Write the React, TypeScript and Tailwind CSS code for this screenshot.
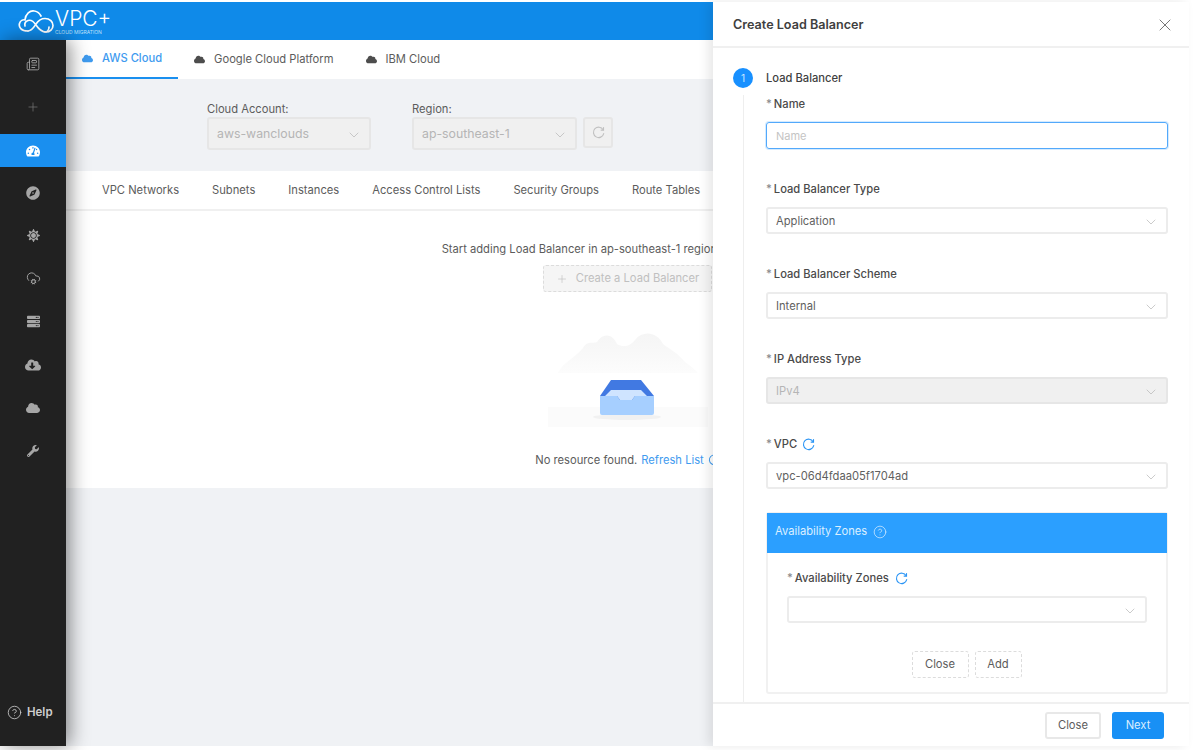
import React from "react";
import { ChevronDown, X, Plus, CircleHelp, Newspaper, CloudCog } from "lucide-react";
import { FaTachometerAlt, FaCompass, FaServer, FaCloud, FaWrench, FaCloudDownloadAlt, FaSun } from "react-icons/fa";

function Logo() {
  return (
    <svg width="36" height="26" viewBox="0 0 36 26" fill="none" stroke="#fff" strokeWidth="1.7" strokeLinecap="round">
      <path d="M10 23 C3 23 0.5 19 1.5 15.5 C2.3 12.5 5 11.5 7 11.8 C7.5 6 12 2 16.5 3 C20 3.6 22 6 23 8" />
      <path d="M10 23 C14 23 16 19 18 16 C20 13 23 10.5 27 10.5 C32 10.5 35 14 35 17.5 C35 21 32 24 28 24 C23 24 20 20 18 17 C16 14 13 11.5 10 12.5 C7 13.5 6.5 16 7 18" />
      <path d="M27 24 C29 24 31 22 31 19" />
    </svg>
  );
}

function Reload({ size = 13, width = 1.3, className = "" }: { size?: number; width?: number; className?: string }) {
  return (
    <svg width={size} height={size} viewBox="0 0 14 14" fill="none" stroke="currentColor" strokeWidth={width} strokeLinecap="round" className={className}>
      <path d="M12 4 A5.6 5.6 0 1 0 12.6 8.2" />
      <path d="M12.4 1.6 V4.4 H9.8" />
    </svg>
  );
}

function SelectBox({ value, disabled, className = "" }: { value?: string; disabled?: boolean; className?: string }) {
  return (
    <div className={`flex h-[27px] items-center justify-between rounded-[3px] border-2 pt-[2px] pl-[8px] pr-[7px] text-[11.2px] ${disabled ? "border-[#e6e6e6] bg-[#f0f0f0] text-[#b5b5b5]" : "border-[#ececec] bg-white text-[#5f5f5f]"} ${className}`}>
      <span>{value}</span>
      <ChevronDown size={16} strokeWidth={1.1} className="text-[#b8b8b8]" />
    </div>
  );
}

function Field({ label, value, disabled, spin }: { label: string; value: string; disabled?: boolean; spin?: boolean }) {
  return (
    <div className="mb-[31px]">
      <div className="mb-[9px] flex h-[18px] items-center text-[11.2px] font-medium text-[#4a4a4a]">
        <span className="mr-[2px] text-[#8a8a8a]">*</span>{label}
        {spin && <Reload size={13} width={1.2} className="ml-[5px] text-[#2b95f5]" />}
      </div>
      <SelectBox value={value} disabled={disabled} />
    </div>
  );
}

const side = [
  <Newspaper size={14} strokeWidth={1.5} />,
  <Plus size={14} strokeWidth={1.2} className="text-[#7a7a7a]" />,
  <FaTachometerAlt size={14} className="text-white" />,
  <FaCompass size={14} />,
  <FaSun size={13} />,
  <CloudCog size={15} strokeWidth={1.5} />,
  <FaServer size={13} />,
  <FaCloudDownloadAlt size={16} />,
  <FaCloud size={14} />,
  <FaWrench size={12} />,
];

function BoxArt() {
  return (
    <svg width="170" height="100" viewBox="0 0 170 100" className="block">
      <defs>
        <linearGradient id="cloudFade" x1="0" y1="0" x2="0" y2="1">
          <stop offset="0" stopColor="#f5f5f5" />
          <stop offset="1" stopColor="#fcfcfc" />
        </linearGradient>
      </defs>
      <path d="M15 41 C20 30 32 26 40 16 C44 8 50 12 54 10 C60 0 70 2 74 12 C80 16 88 14 92 8 C100 -2 114 0 120 12 C128 18 136 22 142 30 C148 34 152 38 155 41 Z" fill="url(#cloudFade)" />
      <rect x="5" y="75" width="160" height="20" fill="#fbfbfb" />
      <ellipse cx="84" cy="85" rx="34" ry="3" fill="#f1f1f1" />
      <path d="M57 64 L68 48 L98 48 L111 64 L111 72 L57 72 Z" fill="#4179e2" />
      <path d="M68 58 L98 58 L104 64 L92 64 L89 68 L77 68 L74 64 L62 64 Z" fill="#cfe4ff" />
      <path d="M57 64 L74 64 L77 68 L89 68 L92 64 L111 64 L111 81 Q111 83 109 83 L59 83 Q57 83 57 81 Z" fill="#a6cfff" />
    </svg>
  );
}

export default function App() {
  return (
    <div className="relative flex h-[750px] w-[1200px] flex-col overflow-hidden bg-white pt-[2px] pb-[4px] pr-[11px] text-[11.2px] text-[#5c5c5c] [font-family:Inter,'Liberation_Sans',sans-serif]">
      <header className="flex h-[38px] shrink-0 items-center bg-[#0f8ae9] pl-[18px] text-white">
        <Logo />
        <div className="mt-[2px] ml-[1px] flex flex-col leading-none">
          <span className="text-[21px] font-light leading-[20px]">VPC+</span>
          <span className="text-[5px] leading-[6px] text-[#bfe0fb]">CLOUD MIGRATION</span>
        </div>
      </header>

      <div className="flex min-h-0 flex-1">
        <aside className="relative z-10 flex w-[66px] shrink-0 flex-col bg-[#212121] pt-[2px] text-[#a6a6a6] shadow-[4px_0_18px_rgba(0,0,0,0.45)]">
          {side.map((icon, i) => (
            <div key={i} className="flex h-[43px] items-center justify-center">
              <div className={`flex h-[33px] w-full items-center justify-center ${i === 2 ? "mt-[2px] bg-[#1a8fef]" : ""}`}>{icon}</div>
            </div>
          ))}
          <div className="mt-auto mb-[25px] flex items-center pl-[7px] text-[11.5px] font-semibold text-[#cfcfcf]">
            <CircleHelp size={15} strokeWidth={1.3} className="mr-[5px]" />
            Help
          </div>
        </aside>

        <main className="flex min-w-0 flex-1 flex-col bg-[#f0f2f5]">
          <nav className="flex h-[39px] shrink-0 items-center bg-white">
            <div className="flex h-full items-center gap-[9px] border-b-2 border-[#1a8fef] px-[16px] font-medium text-[#3f9bef]">
              <FaCloud size={11} />AWS Cloud
            </div>
            <div className="flex h-full items-center gap-[9px] px-[16px]"><FaCloud size={11} className="text-[#4d4d4d]" />Google Cloud Platform</div>
            <div className="flex h-full items-center gap-[9px] px-[16px]"><FaCloud size={11} className="text-[#4d4d4d]" />IBM Cloud</div>
          </nav>

          <section className="flex h-[92px] shrink-0 gap-[41px] pl-[141px] pt-[22px]">
            <div className="w-[164px]">
              <div className="h-[16px] leading-[16px]">Cloud Account:</div>
              <SelectBox value="aws-wanclouds" disabled className="h-[33px] text-[12.3px]" />
            </div>
            <div>
              <div className="h-[16px] leading-[16px]">Region:</div>
              <div className="flex gap-[6px]">
                <SelectBox value="ap-southeast-1" disabled className="h-[33px] w-[165px] text-[12.3px]" />
                <div className="flex h-[31px] w-[30px] items-center justify-center rounded-[3px] border-2 border-[#e6e6e6] bg-[#f0f0f0] text-[#c0c0c0]">
                  <Reload size={13} width={1.2} />
                </div>
              </div>
            </div>
          </section>

          <section className="flex h-[317px] shrink-0 flex-col bg-white">
            <nav className="flex h-[40px] shrink-0 items-center gap-[33px] border-b-2 border-[#f0f0f0] pl-[36px]">
              {["VPC Networks", "Subnets", "Instances", "Access Control Lists", "Security Groups", "Route Tables"].map((t) => (
                <span key={t}>{t}</span>
              ))}
            </nav>
            <div className="flex flex-col items-center pt-[29px]">
              <p className="h-[18px] leading-[18px] whitespace-nowrap">Start adding Load Balancer in ap-southeast-1 region to manage traffic.</p>
              <div className="mt-[7px] flex h-[27px] w-[169px] items-center justify-center gap-[8px] rounded-[3px] border border-dashed border-[#dcdcdc] bg-[#f5f5f5] text-[#c0c0c0]">
                <Plus size={12} strokeWidth={1.3} />Create a Load Balancer
              </div>
              <div className="mt-[40px]"><BoxArt /></div>
              <p className="mt-[19px] flex items-center gap-[4px] leading-[18px]">No resource found. <span className="text-[#3f9bef]">Refresh List</span> <Reload size={12} width={1.2} className="text-[#3f9bef]" /></p>
            </div>
          </section>
        </main>
      </div>

      <aside className="absolute top-[2px] bottom-[4px] left-[713px] z-20 flex w-[476px] flex-col bg-white shadow-[-5px_0_10px_rgba(0,0,0,0.09)]">
        <div className="flex h-[46px] shrink-0 items-center justify-between border-b-2 border-[#f0f0f0] pt-[2px] pl-[20px] pr-[14px]">
          <h1 className="text-[12.6px] font-semibold text-[#404040]">Create Load Balancer</h1>
          <X size={20} strokeWidth={1.2} className="text-[#777]" />
        </div>

        <div className="min-h-0 flex-1 overflow-hidden pl-[20px] pr-[21px] pt-[20px]">
          <div className="flex h-[20px] items-center">
            <span className="flex h-[20px] w-[20px] items-center justify-center rounded-full bg-[#1890ff] text-[10px] text-[#cfe7ff]">1</span>
            <span className="ml-[13px] text-[11.2px] font-medium text-[#3f3f3f]">Load Balancer</span>
          </div>
          <div className="mt-[7px] ml-[10px] border-l border-[#eeeeee] pl-[22px] pb-[40px]">
            <div className="mb-[31px]">
              <div className="mb-[9px] flex h-[18px] items-center text-[11.2px] font-medium text-[#4a4a4a]"><span className="mr-[2px] text-[#8a8a8a]">*</span>Name</div>
              <div className="flex h-[27px] items-center rounded-[3px] border border-[#52a9fb] px-[9px] pt-[1px] text-[11px] text-[#c4c4c4] shadow-[0_0_0_1px_rgba(24,144,255,0.18)]">Name</div>
            </div>
            <Field label="Load Balancer Type" value="Application" />
            <Field label="Load Balancer Scheme" value="Internal" />
            <Field label="IP Address Type" value="IPv4" disabled />
            <Field label="VPC" value="vpc-06d4fdaa05f1704ad" spin />

            <div className="-mt-[8px] h-[182px] rounded-[3px] border-2 border-[#f1f1f1]">
              <div className="-mx-[1px] -mt-[1px] flex h-[40px] items-center gap-[6px] bg-[#2b9fff] pb-[3px] pl-[8px] text-[#dcefff]">
                Availability Zones <CircleHelp size={14} strokeWidth={1.2} />
              </div>
              <div className="px-[19px] pt-[16px]">
                <div className="mb-[9px] flex h-[18px] items-center text-[11.2px] font-medium text-[#4a4a4a]">
                  <span className="mr-[2px] text-[#8a8a8a]">*</span>Availability Zones
                  <Reload size={13} width={1.2} className="ml-[6px] text-[#2b95f5]" />
                </div>
                <SelectBox className="h-[26px]" />
                <div className="mt-[28px] flex justify-center gap-[6px] pr-[1px]">
                  <span className="flex h-[27px] w-[57px] items-center justify-center rounded-[3px] border border-dashed border-[#dcdcdc]">Close</span>
                  <span className="flex h-[27px] w-[47px] items-center justify-center rounded-[3px] border border-dashed border-[#dcdcdc]">Add</span>
                </div>
              </div>
            </div>
          </div>
        </div>

        <div className="flex h-[44px] shrink-0 items-start justify-end gap-[11px] border-t-2 border-[#f0f0f0] pt-[8px] pr-[25px]">
          <span className="flex h-[27px] w-[56px] items-center justify-center rounded-[3px] border-2 border-[#e8e8e8]">Close</span>
          <span className="flex h-[27px] w-[52px] items-center justify-center rounded-[3px] bg-[#1890f5] text-[#d9edff]">Next</span>
        </div>
      </aside>
    </div>
  );
}
